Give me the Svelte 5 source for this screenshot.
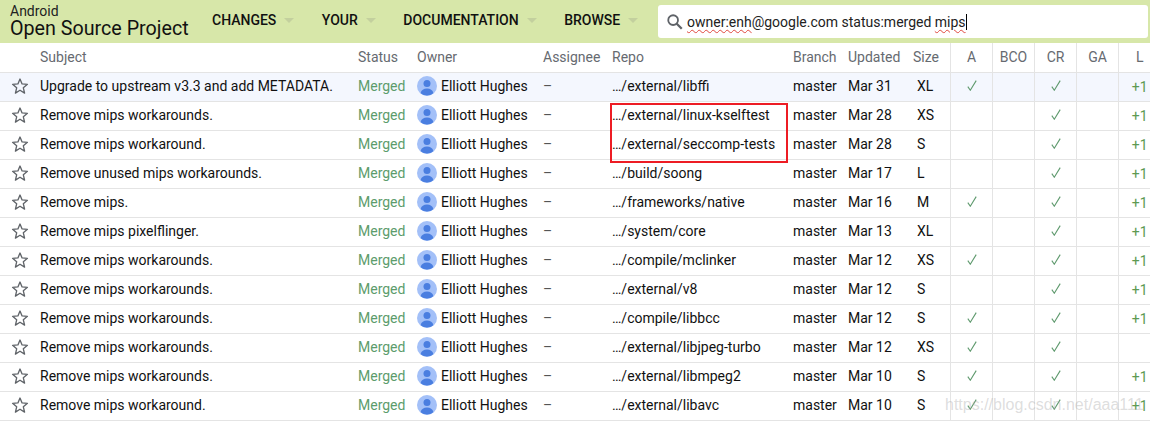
<script>
  const nav = ['CHANGES', 'YOUR', 'DOCUMENTATION', 'BROWSE']
  const labels = ['A', 'BCO', 'CR', 'GA', 'L']

  const rows = [
    { subject: 'Upgrade to upstream v3.3 and add METADATA.', repo: 'libffi', dir: 'external', updated: 'Mar 31', size: 'XL', a: true, l: true },
    { subject: 'Remove mips workarounds.', repo: 'linux-kselftest', dir: 'external', updated: 'Mar 28', size: 'XS', a: false, l: true },
    { subject: 'Remove mips workaround.', repo: 'seccomp-tests', dir: 'external', updated: 'Mar 28', size: 'S', a: false, l: true },
    { subject: 'Remove unused mips workarounds.', repo: 'soong', dir: 'build', updated: 'Mar 17', size: 'L', a: false, l: true },
    { subject: 'Remove mips.', repo: 'native', dir: 'frameworks', updated: 'Mar 16', size: 'M', a: true, l: true },
    { subject: 'Remove mips pixelflinger.', repo: 'core', dir: 'system', updated: 'Mar 13', size: 'XL', a: false, l: true },
    { subject: 'Remove mips workarounds.', repo: 'mclinker', dir: 'compile', updated: 'Mar 12', size: 'XS', a: true, l: true },
    { subject: 'Remove mips workarounds.', repo: 'v8', dir: 'external', updated: 'Mar 12', size: 'S', a: false, l: true },
    { subject: 'Remove mips workarounds.', repo: 'libbcc', dir: 'compile', updated: 'Mar 12', size: 'S', a: true, l: true },
    { subject: 'Remove mips workarounds.', repo: 'libjpeg-turbo', dir: 'external', updated: 'Mar 12', size: 'XS', a: true, l: false },
    { subject: 'Remove mips workarounds.', repo: 'libmpeg2', dir: 'external', updated: 'Mar 10', size: 'S', a: true, l: true },
    { subject: 'Remove mips workaround.', repo: 'libavc', dir: 'external', updated: 'Mar 10', size: 'S', a: true, l: true }
  ]
</script>

{#snippet check()}
  <svg class="tick" viewBox="0 0 10 11" width="10" height="11">
    <path d="M0.8 6.6L3.300 10.200L9.200 0.600" fill="none" stroke="#5f9a6e" stroke-width="1.1" />
  </svg>
{/snippet}

<div class="page">
  <header class="top">
    <div class="brand">
      <div class="brandSmall">Android</div>
      <div class="brandBig">Open Source Project</div>
    </div>
    <nav class="nav">
      {#each nav as item}
        <div class="navItem">{item}<span class="caret"></span></div>
      {/each}
    </nav>
    <div class="search">
      <svg class="searchIcon" viewBox="0 0 24 24" width="18" height="18">
        <circle cx="9.500" cy="9.500" r="6.500" fill="none" stroke="#5f6368" stroke-width="2.400" />
        <path d="M14 14l7 7" stroke="#5f6368" stroke-width="3" fill="none" />
      </svg>
      <span class="query"><span class="typo">owner:enh</span>@google.com status:merged <span class="typo">mips</span></span>
      <span class="cursor"></span>
    </div>
  </header>

  <table class="changes">
    <colgroup>
      <col class="cStar" /><col class="cSubject" /><col class="cStatus" /><col class="cOwner" />
      <col class="cAssignee" /><col class="cRepo" /><col class="cBranch" /><col class="cUpdated" />
      <col class="cSize" /><col class="cLabel" /><col class="cLabel" /><col class="cLabel" />
      <col class="cLabel" /><col class="cLabel" />
    </colgroup>
    <thead>
      <tr>
        <th></th>
        <th>Subject</th>
        <th>Status</th>
        <th>Owner</th>
        <th>Assignee</th>
        <th>Repo</th>
        <th>Branch</th>
        <th>Updated</th>
        <th>Size</th>
        {#each labels as label}
          <th class="label">{label}</th>
        {/each}
      </tr>
    </thead>
    <tbody>
      {#each rows as row, i}
        <tr class:selected={i === 0}>
          <td class="star">
            <svg viewBox="0 0 24 24" width="20" height="20">
              <path d="M12 3.600l2.500 5.900 6.400.5-4.900 4.200 1.500 6.300-5.500-3.400-5.500 3.400 1.500-6.300-4.900-4.200 6.400-.5z" fill="none" stroke="#5f6368" stroke-width="1.600" stroke-linejoin="round" />
            </svg>
          </td>
          <td>{row.subject}</td>
          <td class="merged">Merged</td>
          <td>
            <div class="owner">
              <svg class="avatar" viewBox="0 0 20 20" width="20" height="20">
                <circle cx="10" cy="10" r="10" fill="#a3c0f8" />
                <circle cx="10" cy="7.600" r="3.500" fill="#4a7ee0" />
                <path d="M3.600 17.200c.6-3 3.200-4.600 6.400-4.600s5.800 1.600 6.400 4.600a10 10 0 0 1-12.800 0z" fill="#4a7ee0" />
              </svg>
              Elliott Hughes
            </div>
          </td>
          <td class="none">–</td>
          <td>…/{row.dir}/{row.repo}</td>
          <td>master</td>
          <td>{row.updated}</td>
          <td class="size">{row.size}</td>
          <td class="label">{#if row.a}{@render check()}{/if}</td>
          <td class="label"></td>
          <td class="label">{@render check()}</td>
          <td class="label"></td>
          <td class="label plus">{row.l ? '+1' : ''}</td>
        </tr>
      {/each}
    </tbody>
  </table>

  <div class="highlight"></div>
  <div class="watermark">https://blog.csdn.net/aaa111</div>
</div>

<style>
  :global(body) {
    margin: 0;
    background: #fff;
  }

  .page {
    position: relative;
    width: 1150px;
    height: 423px;
    overflow: hidden;
    font-family: Roboto, "Liberation Sans", sans-serif;
    font-size: 14px;
    color: #111;
  }

  .top {
    display: flex;
    align-items: center;
    height: 43px;
    background: #d7e7a9;
    padding-left: 10px;
    box-sizing: border-box;
  }

  .brand {
    width: 202px;
    flex: none;
  }

  .brandSmall {
    font-size: 14px;
    line-height: 13px;
    color: #222;
  }

  .brandBig {
    font-size: 19.700px;
    line-height: 21px;
    color: #111;
  }

  .nav {
    display: flex;
    width: 446px;
    flex: none;
    margin-top: -4px;
  }

  .navItem {
    display: flex;
    align-items: center;
    font-weight: 500;
    font-size: 14px;
    color: #111;
    margin-right: 18.500px;
  }

  .caret {
    width: 0;
    height: 0;
    margin-left: 8px;
    margin-right: 9px;
    margin-top: 1px;
    border-left: 5px solid transparent;
    border-right: 5px solid transparent;
    border-top: 5px solid #c3d09e;
  }

  .search {
    display: flex;
    align-items: center;
    width: 490px;
    height: 33px;
    flex: none;
    background: #fff;
    border-radius: 3px;
    box-sizing: border-box;
    padding-left: 8px;
  }

  .searchIcon {
    flex: none;
    margin-right: 3px;
  }

  .query {
    font-size: 14px;
    white-space: pre;
    color: #222;
  }

  .typo {
    text-decoration: underline wavy #e0483e 1px;
    text-underline-offset: 2px;
  }

  .cursor {
    width: 1px;
    height: 16px;
    background: #000;
  }

  .changes {
    width: 1160px;
    table-layout: fixed;
    border-collapse: collapse;
  }

  .cStar { width: 36px; }
  .cSubject { width: 318px; }
  .cStatus { width: 59px; }
  .cOwner { width: 126px; }
  .cAssignee { width: 69px; }
  .cRepo { width: 181px; }
  .cBranch { width: 55px; }
  .cUpdated { width: 65px; }
  .cSize { width: 41px; }
  .cLabel { width: 42px; }

  th, td {
    padding: 0 0 2px 4px;
    box-sizing: border-box;
    border-bottom: 1px solid #e4e4e4;
    text-align: left;
    white-space: nowrap;
    overflow: hidden;
  }

  th {
    font-weight: 400;
    color: #666a70;
    height: 29px;
    padding-bottom: 0;
  }

  td {
    height: 29px;
  }

  .selected td {
    background: #f4f7fe;
  }

  th.label, td.label {
    padding: 0 0 2px 1px;
    text-align: center;
    border-left: 1px solid #e4e4e4;
  }

  th.label {
    padding-bottom: 0;
  }

  .star {
    padding: 0 0 1px 10px;
    line-height: 0;
  }

  .merged {
    color: #5c9c6c;
  }

  .owner {
    display: flex;
    align-items: center;
    gap: 4px;
  }

  .avatar {
    flex: none;
  }

  .none {
    color: #555;
  }

  .size {
    padding-left: 8px;
  }

  .tick {
    display: block;
    margin: 0 auto 1px;
  }

  td.plus {
    color: #5d9a52;
    padding-bottom: 0;
  }

  .highlight {
    position: absolute;
    left: 610px;
    top: 103px;
    width: 174px;
    height: 56px;
    border: 2px solid #ed1c24;
  }

  .watermark {
    position: absolute;
    left: 945px;
    top: 396px;
    font-family: "Liberation Sans", sans-serif;
    font-size: 16px;
    color: rgba(170, 170, 170, 0.4);
    white-space: nowrap;
  }
</style>
